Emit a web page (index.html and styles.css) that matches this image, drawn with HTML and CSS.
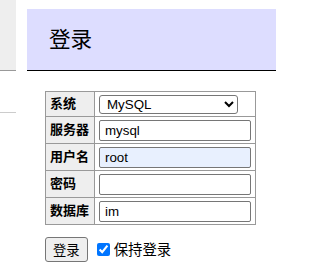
FILE: index.html
```html
<!DOCTYPE html>
<html lang="zh">
<head>
    <meta charset="UTF-8">
    <title>登录 - Adminer</title>
    <link rel="stylesheet" href="styles.css">
</head>
<body>
    <div class="page">
        <div class="menu">
            <div class="menu-head"></div>
            <div class="menu-rule"></div>
        </div>

        <div class="content">
            <h2>登录</h2>
            <form class="login-form">
                <table class="login-table">
                    <tr>
                        <th>系统</th>
                        <td>
                            <select class="field-select">
                                <option>MySQL</option>
                            </select>
                        </td>
                    </tr>
                    <tr>
                        <th>服务器</th>
                        <td><input class="field" type="text" value="mysql"></td>
                    </tr>
                    <tr>
                        <th>用户名</th>
                        <td><input class="field field-filled" type="text" value="root"></td>
                    </tr>
                    <tr>
                        <th>密码</th>
                        <td><input class="field" type="password"></td>
                    </tr>
                    <tr>
                        <th>数据库</th>
                        <td><input class="field" type="text" value="im"></td>
                    </tr>
                </table>
                <p class="actions">
                    <input class="submit-btn" type="submit" value="登录">
                    <label class="remember"><input type="checkbox" checked>保持登录</label>
                </p>
            </form>
        </div>
    </div>
</body>
</html>
```

FILE: styles.css
```css
* {
    box-sizing: border-box;
}

body {
    margin: 0;
    font: 14.4px/1.25 "Liberation Sans", "Noto Sans CJK SC", sans-serif;
    color: #000;
    background: #fff;
}

.page {
    display: flex;
    align-items: flex-start;
}

.menu {
    width: 16px;
    flex-shrink: 0;
}

.menu-head {
    height: 71px;
    background: #eee;
    border-bottom: 1px solid #999;
}

.menu-rule {
    margin-top: 41px;
    border-top: 1px solid #ccc;
}

.content {
    margin-left: 11px;
    padding-top: 9px;
    width: 249px;
}

h2 {
    margin: 0 0 20px 0;
    padding: 17px 22px;
    font-size: 21.6px;
    line-height: 27px;
    font-weight: normal;
    background: #ddf;
    border-bottom: 1px solid #000;
}

.login-form {
    margin: 0 0 0 18px;
}

.login-table {
    border-collapse: collapse;
    border-spacing: 0;
    border-top: 1px solid #999;
    border-left: 1px solid #999;
    font-size: 13px;
}

.login-table th,
.login-table td {
    border-right: 1px solid #999;
    border-bottom: 1px solid #999;
    padding: 3px 4px 2px;
}

.login-table th {
    background: #eee;
    text-align: left;
    font-weight: bold;
    white-space: nowrap;
    padding-right: 5px;
}

.field {
    display: block;
    width: 152px;
    height: 21px;
    margin: 0;
    padding: 1px 5px;
    font: 13.33px "Liberation Sans", "Noto Sans CJK SC", sans-serif;
    border: 1px solid #767676;
    border-radius: 2px;
    background: #fff;
}

.field-filled {
    background: #e8f0fe;
}

.field-select {
    display: block;
    width: 139px;
    height: 19px;
    margin: 0;
    padding: 0 3px;
    font: 13.33px "Liberation Sans", "Noto Sans CJK SC", sans-serif;
    border: 1px solid #767676;
    border-radius: 3px;
    background: #fff;
}

.actions {
    margin: 12px 0 0;
    display: flex;
    align-items: center;
    gap: 9px;
}

.submit-btn {
    margin: 0;
    height: 25px;
    padding: 0 7px;
    font: 13.33px "Liberation Sans", "Noto Sans CJK SC", sans-serif;
    border: 1px solid #767676;
    border-radius: 3px;
    background: #efefef;
}

.remember {
    display: flex;
    align-items: center;
    font-size: 14.4px;
}

.remember input {
    margin: 0 4px 0 0;
    width: 13px;
    height: 13px;
}
```
